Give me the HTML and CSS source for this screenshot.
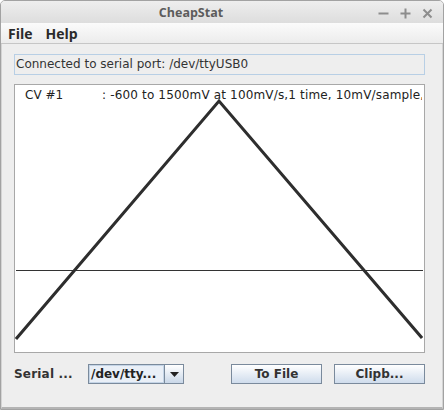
FILE: index.html
```html
<!DOCTYPE html>
<html>
<head>
<meta charset="utf-8">
<link rel="stylesheet" href="styles.css">
</head>
<body>
<div class="window">
  <div class="titlebar">
    <div class="title">CheapStat</div>
    <div class="wm">
      <svg width="11" height="12" viewBox="0 0 11 12"><path d="M0.5 6.5H10.5" stroke="#8d8d8d" stroke-width="2"/></svg>
      <svg width="11" height="12" viewBox="0 0 11 12"><path d="M0.5 6.5H10.5M5.5 1.5V11.5" stroke="#8d8d8d" stroke-width="2"/></svg>
      <svg width="11" height="12" viewBox="0 0 11 12"><path d="M1.5 2.5L9.5 10.5M9.5 2.5L1.5 10.5" stroke="#8d8d8d" stroke-width="2"/></svg>
    </div>
  </div>
  <div class="menubar"><span class="menu">File</span><span class="menu">Help</span></div>
  <div class="content">
    <div class="status">Connected to serial port: /dev/ttyUSB0</div>
    <div class="plot">
      <svg class="chart" width="408" height="267" viewBox="0 0 408 267">
        <line x1="1" y1="185.5" x2="408" y2="185.5" stroke="#333" stroke-width="1"/>
        <polyline points="1,254 204,16 407,253" fill="none" stroke="#2e2e2e" stroke-width="3" stroke-linejoin="miter"/>
      </svg>
      <div class="legend"><span class="lname">CV #1</span><span class="ldesc">: -600 to 1500mV at 100mV/s,1 time, 10mV/sample,</span></div>
    </div>
    <div class="bottom">
      <span class="label">Serial ...</span>
      <div class="combo"><span class="combo-text">/dev/tty...</span><span class="combo-btn"><svg width="9" height="5" viewBox="0 0 9 5"><path d="M0 0H9L4.5 5Z" fill="#222"/></svg></span></div>
      <div class="spacer"></div>
      <button class="btn">To File</button>
      <button class="btn">Clipb...</button>
    </div>
  </div>
</div>
</body>
</html>
```
FILE: styles.css
```css
html, body {
  margin: 0;
  padding: 0;
  background: #ffffff;
}
.window {
  width: 444px;
  height: 410px;
  box-sizing: border-box;
  border: 1px solid #a2a2a2;
  border-radius: 5px 5px 0 0;
  background: #eeeeee;
  display: flex;
  flex-direction: column;
  overflow: hidden;
}
.titlebar {
  height: 22px;
  flex: none;
  display: flex;
  align-items: center;
  background: linear-gradient(#eeeeee, #dddddd);
}
.title {
  flex: 1;
  text-align: center;
  font-family: "Open Sans", sans-serif;
  font-weight: bold;
  font-size: 12.5px;
  color: #5c5c5c;
  padding-left: 3px;
}
.wm {
  display: flex;
  gap: 11px;
  padding-right: 10px;
  padding-top: 1px;
}
.menubar {
  height: 20px;
  flex: none;
  display: flex;
  align-items: center;
  gap: 13px;
  padding-left: 7px;
  background: linear-gradient(#fbfbfb, #ececec);
  border-bottom: 1px solid #c6c6c6;
}
.menu {
  font-family: "Open Sans", sans-serif;
  font-weight: bold;
  font-size: 14px;
  color: #2a2a2a;
}
.content {
  flex: 1;
  display: flex;
  flex-direction: column;
  padding: 10px 17px 0 12px;
  border-left: 1px solid #d4d4d4;
  border-right: 1px solid #d4d4d4;
  border-bottom: 2px solid #b4b4b4;
}
.status {
  height: 19px;
  border: 1px solid #b8cfe5;
  font-family: "DejaVu Sans", sans-serif;
  font-size: 12px;
  line-height: 19px;
  color: #333333;
  padding-left: 1px;
  white-space: nowrap;
}
.plot {
  margin-top: 9px;
  height: 267px;
  border: 1px solid #a8a8a8;
  background: #ffffff;
  display: grid;
  overflow: hidden;
}
.chart, .legend {
  grid-area: 1 / 1;
}
.legend {
  display: flex;
  padding: 3px 0 0 10px;
  font-family: "DejaVu Sans", sans-serif;
  font-size: 12px;
  line-height: 14px;
  color: #222222;
  white-space: nowrap;
  overflow: hidden;
  height: 14px;
}
.lname {
  flex: none;
  width: 77px;
}
.ldesc {
  flex: none;
  width: 320px;
  overflow: hidden;
  letter-spacing: 0.16px;
}
.bottom {
  margin-top: 11px;
  height: 20px;
  display: flex;
  align-items: center;
}
.label {
  width: 74px;
  font-family: "DejaVu Sans", sans-serif;
  font-weight: bold;
  font-size: 12px;
  letter-spacing: 0.2px;
  color: #333333;
}
.combo {
  width: 96px;
  height: 20px;
  box-sizing: border-box;
  border: 1px solid #7a8a9c;
  display: flex;
}
.combo-text {
  flex: 1;
  background: #e9eff7;
  border: 1px solid #c4d4e6;
  font-family: "DejaVu Sans", sans-serif;
  font-weight: bold;
  font-size: 12px;
  line-height: 16px;
  color: #222222;
  padding-left: 1px;
  white-space: nowrap;
  overflow: hidden;
}
.combo-btn {
  width: 18px;
  border-left: 1px solid #7a8a9c;
  background: linear-gradient(#ffffff, #c9d7e8);
  display: flex;
  align-items: center;
  justify-content: center;
}
.spacer {
  flex: 1;
}
.btn {
  width: 91px;
  height: 20px;
  margin: 0 0 0 12px;
  padding: 0;
  border: 1px solid #7a8a9c;
  border-radius: 0;
  background: linear-gradient(#ffffff, #cfdcec);
  font-family: "DejaVu Sans", sans-serif;
  font-weight: bold;
  font-size: 12px;
  color: #333333;
}
```
